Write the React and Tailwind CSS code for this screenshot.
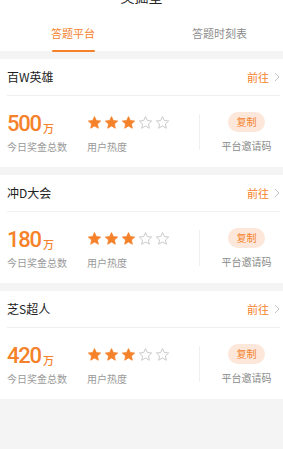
import React from "react";

const ORANGE = "#f5822b";

function Star({ filled }) {
  return (
    <svg width="15" height="15" viewBox="0 0 24 24" className="block">
      <path
        d="M12 2.5l2.95 6.35 6.95.75-5.2 4.7 1.45 6.85L12 17.6l-6.15 3.55 1.45-6.85-5.2-4.7 6.95-.75z"
        fill={filled ? ORANGE : "none"}
        stroke={filled ? ORANGE : "#c6c6c6"}
        strokeWidth={filled ? 1.2 : 1.5}
        strokeLinejoin="round"
      />
    </svg>
  );
}

function Card({ name, amount }) {
  return (
    <div className="bg-white pl-[7px] pr-[3px]">
      <div className="h-[36px] flex items-center justify-between">
        <span className="text-[12px] text-[#222]">{name}</span>
        <span className="flex items-center">
          <span className="text-[11px] text-[#f5822b]">前往</span>
          <svg width="6" height="10" viewBox="0 0 6 10" className="ml-[5px]">
            <path d="M1 1l4 4-4 4" fill="none" stroke="#c4c4c4" strokeWidth="1" />
          </svg>
        </span>
      </div>
      <div className="h-px bg-[#f0f0f0]" />
      <div className="flex items-center h-[71px]">
        <div className="w-[80px] flex flex-col">
          <div className="flex items-end h-[24px]">
            <span className="text-[22px] leading-[22px] font-medium tracking-[-1.2px] text-[#f5822b] [font-family:Roboto,sans-serif]">{amount}</span>
            <span className="text-[11px] leading-[14px] font-medium text-[#f5822b] ml-[2px]">万</span>
          </div>
          <span className="mt-[6px] text-[10px] leading-[12px] text-[#9a9a9a] whitespace-nowrap">今日奖金总数</span>
        </div>
        <div className="w-[112px] flex flex-col">
          <div className="flex gap-[2px] h-[24px] items-center">
            <Star filled />
            <Star filled />
            <Star filled />
            <Star />
            <Star />
          </div>
          <span className="mt-[6px] text-[10px] leading-[12px] text-[#9a9a9a]">用户热度</span>
        </div>
        <div className="w-px h-[36px] bg-[#f0f0f0]" />
        <div className="flex-1 pl-[13px] flex flex-col items-center">
          <div className="w-[37px] h-[20px] rounded-full bg-[#fce7da] flex items-center justify-center text-[10px] text-[#f5822b]">复制</div>
          <span className="mt-[8px] text-[10px] leading-[12px] text-[#8a8a8a] whitespace-nowrap">平台邀请码</span>
        </div>
      </div>
    </div>
  );
}

export default function App() {
  return (
    <div className="w-[283px] h-[449px] overflow-hidden bg-[#f4f4f4] [font-family:'Noto_Sans_CJK_SC','Noto_Sans',sans-serif]">
      <div className="bg-white h-[51px] relative">
        <div className="absolute left-0 right-0 top-[-13px] text-center text-[14px] leading-[18px] text-[#222]">英掘星</div>
        <div className="flex pl-[51px] pt-[26px]">
          <div className="flex flex-col items-center">
            <span className="text-[11px] leading-[15px] text-[#f5822b]">答题平台</span>
            <span className="mt-[9px] w-[43px] h-[2px] rounded-full bg-[#f5822b]" />
          </div>
          <span className="ml-[97px] text-[11px] leading-[15px] text-[#8c8c8c]">答题时刻表</span>
        </div>
      </div>
      <div className="h-[8px]" />
      <Card name="百W英雄" amount="500" />
      <div className="h-[8px]" />
      <Card name="冲D大会" amount="180" />
      <div className="h-[8px]" />
      <Card name="芝S超人" amount="420" />
    </div>
  );
}
